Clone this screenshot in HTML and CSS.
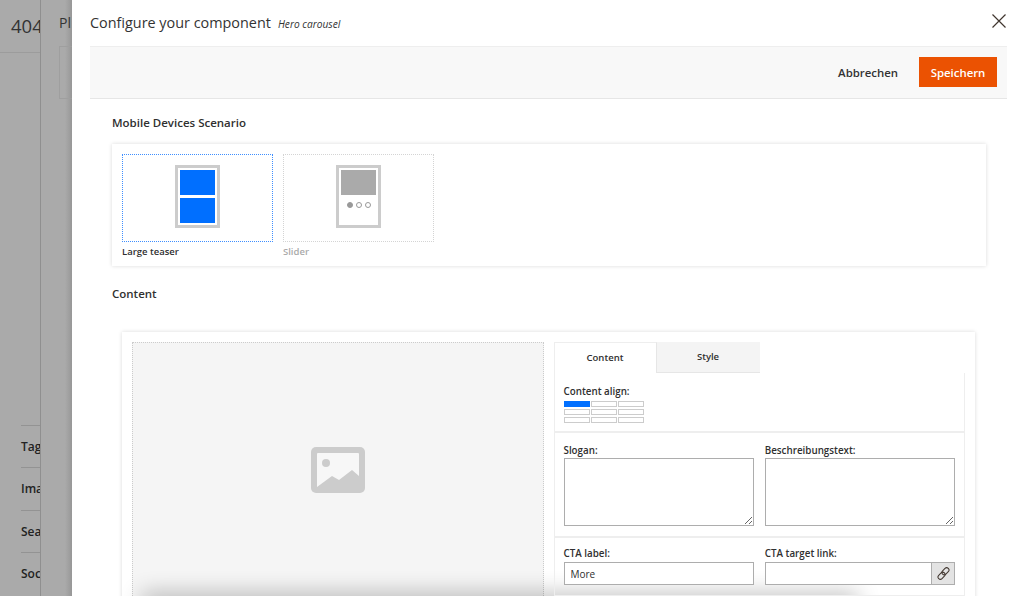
FILE: index.html
```html
<!DOCTYPE html>
<html lang="de">
<head>
    <meta charset="UTF-8">
    <meta name="viewport" content="width=device-width, initial-scale=1.0">
    <title>Configure your component</title>
    <link rel="stylesheet" href="styles.css">
</head>
<body>

<div class="layer layer-page">
    <div class="page-title">404</div>
    <div class="page-rule"></div>
    <ul class="page-list">
        <li>Tags</li>
        <li>Images</li>
        <li>Search</li>
        <li>Social</li>
    </ul>
</div>

<div class="layer layer-second">
    <div class="second-title">Pl</div>
    <div class="second-bar"></div>
</div>

<div class="modal">
    <header class="modal-head">
        <h1>Configure your component</h1>
        <em>Hero carousel</em>
        <svg class="close" width="14" height="14" viewBox="0 0 14 14"><path d="M.5.5l13 13M13.500.5l-13 13" stroke="#41362f" stroke-width="1.200" fill="none"/></svg>
    </header>

    <div class="toolbar">
        <button class="btn-cancel">Abbrechen</button>
        <button class="btn-save">Speichern</button>
    </div>

    <h2 class="section-title">Mobile Devices Scenario</h2>
    <div class="scenario-card">
        <div class="scenario active">
            <div class="scenario-box">
                <div class="phone">
                    <div class="block-blue"></div>
                    <div class="block-blue"></div>
                </div>
            </div>
            <div class="scenario-label">Large teaser</div>
        </div>
        <div class="scenario">
            <div class="scenario-box">
                <div class="phone">
                    <div class="block-grey"></div>
                    <div class="dots"><i class="filled"></i><i></i><i></i></div>
                </div>
            </div>
            <div class="scenario-label">Slider</div>
        </div>
    </div>

    <h2 class="section-title content-title">Content</h2>
    <div class="content-card">
        <div class="dropzone">
            <svg width="54" height="46" viewBox="0 0 54 46">
                <rect width="54" height="46" rx="5" fill="#ccc"/>
                <path d="M6 7a1 1 0 0 1 1-1h40a1 1 0 0 1 1 1v22l-7-6-13 10-7-4L6 40z" fill="#f7f7f7"/>
                <circle cx="15" cy="16" r="4" fill="#ccc"/>
            </svg>
        </div>
        <div class="editor">
            <div class="tabs">
                <div class="tab active">Content</div>
                <div class="tab">Style</div>
            </div>
            <div class="group group-align">
                <label>Content align:</label>
                <div class="align-grid">
                    <i class="on"></i><i></i><i></i>
                    <i></i><i></i><i></i>
                    <i></i><i></i><i></i>
                </div>
            </div>
            <div class="group group-text">
                <div class="field">
                    <label>Slogan:</label>
                    <textarea></textarea>
                </div>
                <div class="field">
                    <label>Beschreibungstext:</label>
                    <textarea></textarea>
                </div>
            </div>
            <div class="group group-cta">
                <div class="field">
                    <label>CTA label:</label>
                    <input type="text" value="More">
                </div>
                <div class="field">
                    <label>CTA target link:</label>
                    <div class="link-input">
                        <input type="text">
                        <span class="link-btn">
                            <svg width="13" height="13" viewBox="0 0 14 14" fill="none" stroke="#41362f" stroke-width="1.100">
                                <rect x="6.600" y="0.300" width="5" height="8.600" rx="2.500" transform="rotate(45 9.100 4.600)"/>
                                <rect x="2.400" y="5.100" width="5" height="8.600" rx="2.500" transform="rotate(45 4.900 9.400)"/>
                            </svg>
                        </span>
                    </div>
                </div>
            </div>
        </div>
        <div class="bottom-shadow"></div>
    </div>
</div>

</body>
</html>
```

FILE: styles.css
```css
* {
    box-sizing: border-box;
}
html, body {
    height: 100%;
}
body {
    font-family: "Open Sans", Arial, sans-serif;
    margin: 0;
    padding: 0;
    display: flex;
    overflow: hidden;
    background-color: #fff;
    color: #303030;
}
.layer {
    flex: none;
    height: 596px;
    overflow: hidden;
    background-color: #aaa;
    white-space: nowrap;
}
.layer-page {
    width: 41px;
    border-right: 1px solid #8f8f8f;
    padding-top: 13px;
}
.page-title {
    font-size: 18.500px;
    line-height: 26px;
    padding-left: 11px;
    color: #333;
}
.page-rule {
    height: 1px;
    margin-top: 13px;
    background-color: #9c9c9c;
}
.page-list {
    list-style: none;
    margin: 372px 0 0 21px;
    padding: 0;
}
.page-list li {
    height: 42.300px;
    line-height: 42px;
    font-size: 12px;
    font-weight: 600;
    color: #222;
    border-top: 1px solid #939393;
}
.layer-second {
    width: 31px;
    padding: 14px 0 0 18px;
    background: linear-gradient(to right, #aaa 24px, #979797);
}
.second-title {
    font-size: 14px;
    line-height: 18px;
    color: #333;
}
.second-bar {
    height: 53px;
    margin-top: 14px;
    border: 1px solid #9f9f9f;
    border-right: none;
}
.modal {
    flex: 1;
    height: 596px;
    overflow: hidden;
    padding: 0 17px 0 18px;
    position: relative;
}
.modal-head {
    display: flex;
    align-items: baseline;
    height: 46px;
    padding-top: 12px;
}
.modal-head h1 {
    margin: 0;
    font-size: 14.400px;
    line-height: 22px;
    font-weight: 400;
    color: #333;
}
.modal-head em {
    margin-left: 7px;
    font-size: 10.200px;
    color: #333;
}
.close {
    position: absolute;
    top: 14px;
    right: 18px;
}
.toolbar {
    display: flex;
    align-items: center;
    justify-content: flex-end;
    height: 53px;
    padding-right: 10px;
    padding-bottom: 1px;
    background-color: #f8f8f8;
    border-top: 1px solid #eee;
    border-bottom: 1px solid #e6e6e6;
}
.toolbar button {
    font-family: inherit;
    font-size: 11.400px;
    font-weight: 600;
    border: none;
    cursor: pointer;
}
.btn-cancel {
    margin-right: 21px;
    padding: 0;
    background: none;
    color: #333;
}
.btn-save {
    width: 78px;
    height: 30px;
    background-color: #eb5202;
    color: #fff;
}
.section-title {
    margin: 16px 0 0 22px;
    font-size: 11.500px;
    line-height: 16px;
    font-weight: 600;
    color: #303030;
}
.scenario-card {
    display: flex;
    gap: 10px;
    width: 874px;
    height: 122px;
    margin: 13px 0 0 22px;
    padding: 10px;
    background-color: #fff;
    box-shadow: 0 0 4px rgba(0, 0, 0, 0.15);
}
.scenario {
    width: 151px;
}
.scenario-box {
    display: flex;
    align-items: center;
    justify-content: center;
    height: 88px;
    padding-bottom: 3px;
    border: 1px dotted #d4d4d4;
}
.scenario.active .scenario-box {
    border: 1px dotted #3f8fff;
}
.scenario-label {
    margin-top: 3px;
    font-size: 9.500px;
    line-height: 13px;
    font-weight: 600;
    color: #aaa;
}
.scenario.active .scenario-label {
    color: #303030;
}
.phone {
    display: flex;
    flex-direction: column;
    gap: 3px;
    width: 45px;
    height: 63px;
    padding: 2px;
    border: 3px solid #ccc;
    background-color: #fff;
}
.block-blue {
    flex: 1;
    background-color: #006fff;
}
.block-grey {
    height: 25px;
    background-color: #aaa;
}
.dots {
    display: flex;
    justify-content: center;
    gap: 3px;
    margin-top: 4px;
}
.dots i {
    width: 6px;
    height: 6px;
    border-radius: 50%;
    border: 1px solid #999;
}
.dots i.filled {
    background-color: #999;
}
.content-title {
    margin-top: 20px;
}
.content-card {
    display: flex;
    gap: 10px;
    width: 853px;
    height: 300px;
    margin: 30px 0 0 32px;
    padding: 10px;
    background-color: #fff;
    box-shadow: 0 0 4px rgba(0, 0, 0, 0.15);
    position: relative;
}
.dropzone {
    display: flex;
    align-items: flex-start;
    justify-content: center;
    width: 412px;
    padding-top: 104px;
    background-color: #f5f5f5;
    border: 1px dotted #ccc;
}
.editor {
    width: 412px;
    position: relative;
    z-index: 1;
}
.tabs {
    display: flex;
    height: 31px;
}
.tab {
    width: 103px;
    font-size: 9.500px;
    font-weight: 600;
    line-height: 30px;
    text-align: center;
    background-color: #f4f4f4;
    border-bottom: 1px solid #e6e6e6;
}
.tab.active {
    line-height: 29px;
    background-color: #fff;
    border-top: 1px solid #eee;
    border-left: 1px solid #eee;
    border-right: 1px solid #e6e6e6;
    border-bottom: none;
}
.group {
    padding: 12px 9px 10px;
    border-left: 1px solid #eee;
    border-right: 1px solid #eee;
    border-bottom: 2px solid #eee;
}
.group label {
    display: block;
    font-size: 9.800px;
    line-height: 13px;
    font-weight: 600;
    color: #303030;
}
.group-align {
    height: 60px;
}
.align-grid {
    display: grid;
    grid-template-columns: repeat(3, 26px);
    grid-auto-rows: 6px;
    gap: 2px 1px;
    margin-top: 3px;
}
.align-grid i {
    border: 1px solid #ccc;
}
.align-grid i.on {
    background-color: #006fff;
    border-color: #006fff;
}
.group-text,
.group-cta {
    display: flex;
    gap: 11px;
}
.group-text {
    height: 105px;
    padding-top: 11px;
}
.group-cta {
    padding-top: 9px;
}
.field {
    flex: 1;
    min-width: 0;
}
.field textarea {
    display: block;
    width: 100%;
    height: 68px;
    margin-top: 1px;
    border: 1px solid #adadad;
    border-radius: 0;
    outline: none;
}
.field input {
    display: block;
    width: 100%;
    height: 23px;
    margin-top: 2px;
    padding: 0 6px;
    font-family: inherit;
    font-size: 10px;
    color: #303030;
    border: 1px solid #adadad;
    border-radius: 0;
    outline: none;
}
.link-input {
    display: flex;
}
.link-input input {
    flex: 1;
    min-width: 0;
    border-right: none;
}
.link-btn {
    display: flex;
    align-items: center;
    justify-content: center;
    flex: none;
    width: 24px;
    height: 23px;
    margin-top: 2px;
    background-color: #e3e3e3;
    border: 1px solid #adadad;
}
.bottom-shadow {
    position: absolute;
    left: 28px;
    top: 270px;
    width: 700px;
    height: 0;
    box-shadow: 0 0 22px 8px rgba(0, 0, 0, 0.3);
}
```
